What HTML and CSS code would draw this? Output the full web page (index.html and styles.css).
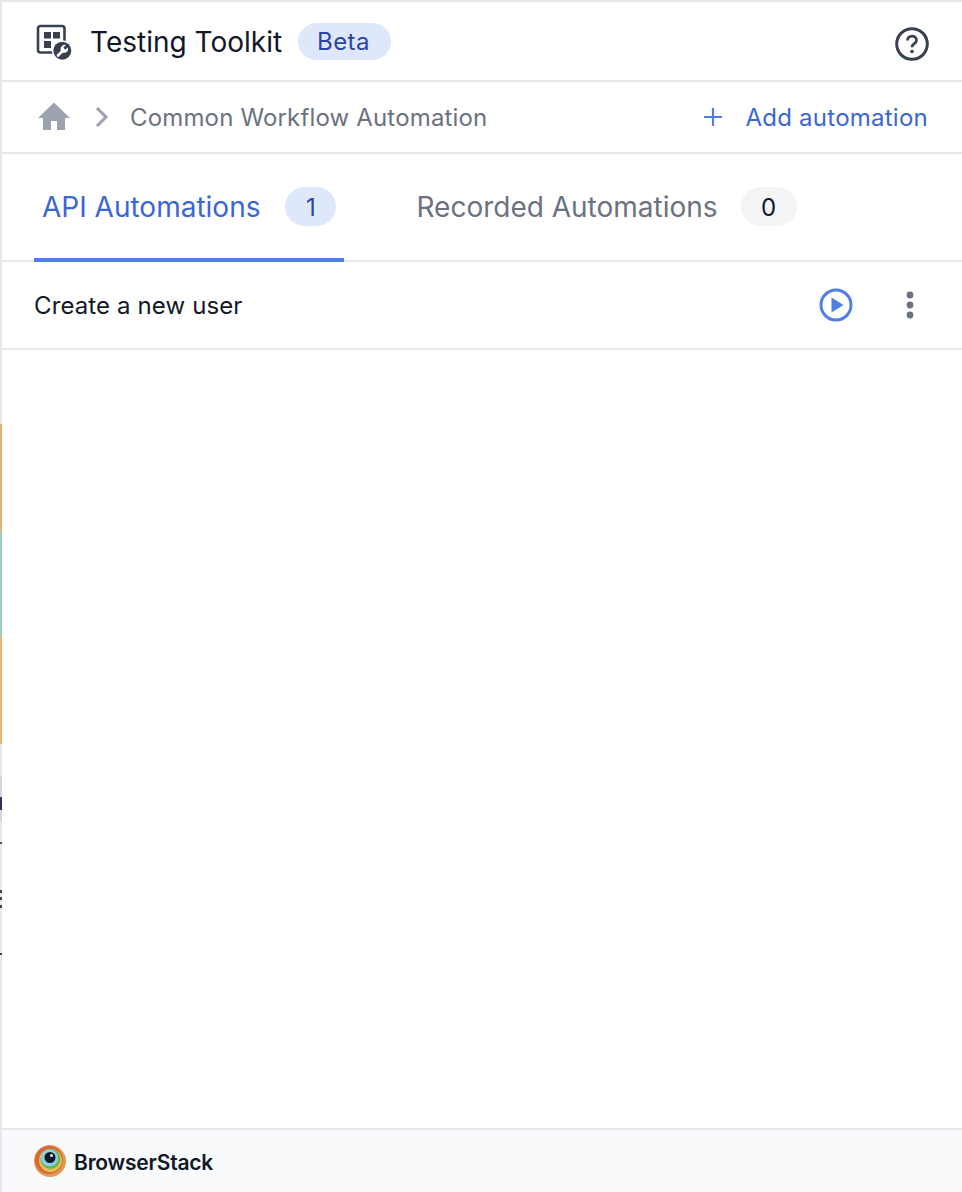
FILE: index.html
```html
<!DOCTYPE html>
<html lang="en">
<head>
<meta charset="utf-8">
<title>Testing Toolkit</title>
<link rel="stylesheet" href="styles.css">
</head>
<body>
<div class="edge" aria-hidden="true"></div>
<main class="panel">
  <header class="topbar">
    <div class="brand">
      <svg class="toolkit-icon" width="38" height="38" viewBox="0 0 38 38">
        <path d="M20 29.500H6.500A2.500 2.500 0 0 1 4 27V5.500A2.500 2.500 0 0 1 6.500 3h21.500A2.500 2.500 0 0 1 30.500 5.500V18" fill="none" stroke="#374151" stroke-width="2.600"/>
        <rect x="10" y="9" width="7" height="6.500" fill="#374151"/><rect x="19" y="9" width="7" height="6.500" fill="#374151"/><rect x="10" y="18" width="7" height="7" fill="#374151"/>
        <circle cx="28.300" cy="27.700" r="10.500" fill="#fff"/>
        <circle cx="28.300" cy="27.700" r="9" fill="#374151"/>
        <path d="M24 32.500l5-5" stroke="#fff" stroke-width="2.600" stroke-linecap="round"/>
        <path d="M27.500 29a4.500 4.500 0 0 1 .8-6.300 4.500 4.500 0 0 1 3.700-.700l-2.600 2.500 1.800 2.200 2.800-2.200a4.500 4.500 0 0 1-1.100 4.200 4.500 4.500 0 0 1-5.400.300z" fill="#fff"/>
      </svg>
      <h1 class="title">Testing Toolkit</h1>
      <span class="beta">Beta</span>
    </div>
    <svg class="help" width="34" height="34" viewBox="0 0 34 34" fill="none" stroke="#374151">
      <circle cx="17" cy="17" r="15.300" stroke-width="3"/>
      <path d="M12.500 13.500c0-2.600 2-4.300 4.500-4.300s4.500 1.700 4.500 4c0 3.500-4.500 3.500-4.500 7" stroke-width="2.800"/>
      <circle cx="17" cy="24.500" r="1.800" fill="#374151" stroke="none"/>
    </svg>
  </header>
  <nav class="crumbs">
    <div class="trail">
      <svg class="home" width="36" height="36" viewBox="0 0 36 36"><path d="M18 3.500L2 19h5v12h8v-9h6v9h8V19h5z" fill="#9ca3af"/></svg>
      <svg class="chev" width="16" height="22" viewBox="0 0 16 22" fill="none"><path d="M3 2l9 9-9 9" stroke="#9ca3af" stroke-width="3"/></svg>
      <span class="crumb-text">Common Workflow Automation</span>
    </div>
    <a class="add">
      <svg width="20" height="20" viewBox="0 0 20 20"><path d="M10 1v18M1 10h18" stroke="#4f7fe5" stroke-width="2.200"/></svg>
      <span>Add automation</span>
    </a>
  </nav>
  <div class="tabs">
    <div class="tab tab-active"><span>API Automations</span><b class="count count-blue">1</b></div>
    <div class="tab"><span>Recorded Automations</span><b class="count count-gray">0</b></div>
  </div>
  <div class="row">
    <span class="row-name">Create a new user</span>
    <div class="row-actions">
      <svg width="34" height="34" viewBox="0 0 34 34"><circle cx="17" cy="17" r="15" fill="none" stroke="#4f7fe5" stroke-width="3"/><path d="M12.500 9.500L24.500 17l-12 7.500z" fill="#4f7fe5"/></svg>
      <svg width="10" height="28" viewBox="0 0 10 28" fill="#6b7280"><circle cx="5" cy="4" r="3.400"/><circle cx="5" cy="14" r="3.400"/><circle cx="5" cy="24" r="3.400"/></svg>
    </div>
  </div>
  <div class="spacer"></div>
  <footer class="foot">
    <svg width="32" height="32" viewBox="0 0 32 32">
      <circle cx="16" cy="16" r="16" fill="#e39a4e"/>
      <circle cx="15" cy="15" r="14" fill="#d6683f"/>
      <circle cx="16.500" cy="15.500" r="11.500" fill="#e0c04e"/>
      <circle cx="16.500" cy="14" r="10" fill="#6fb356"/>
      <circle cx="15.500" cy="13" r="8.500" fill="#8fd0e0"/>
      <circle cx="16" cy="12.500" r="5.500" fill="#111827"/>
      <circle cx="17.500" cy="10.500" r="1.500" fill="#fff"/>
    </svg>
    <span class="foot-name">BrowserStack</span>
  </footer>
</main>
</body>
</html>
```
FILE: styles.css
```css
* { box-sizing: border-box; }
html, body { margin: 0; padding: 0; background: #fff; }
body { width: 962px; height: 1192px; position: relative; overflow: hidden; font-family: Inter, "Liberation Sans", sans-serif; }
.edge {
  position: absolute; left: 0; top: 0; width: 2px; height: 1192px;
  background: linear-gradient(to bottom,
    #e5e7eb 0 424px, #e0b56e 424px 532px, #9fcfc4 532px 636px, #ecb76f 636px 744px,
    #e5e7eb 744px 776px, #d5d7de 776px 797px, #2b3560 797px 810px, #d5d7de 810px 822px,
    #e5e7eb 822px 842px, #555 842px 844px, #e5e7eb 844px 890px, #444 890px 893px,
    #e5e7eb 893px 897px, #444 897px 900px, #e5e7eb 900px 905px, #444 905px 908px,
    #e5e7eb 908px 953px, #444 953px 955px, #e5e7eb 955px);
}
.panel { height: 1192px; display: flex; flex-direction: column; padding-left: 2px; border-top: 2px solid #e5e7eb; }
.topbar { height: 80px; display: flex; align-items: center; justify-content: space-between; padding: 2px 33px 0 32px; border-bottom: 2px solid #e5e7eb; flex: none; }
.brand { display: flex; align-items: center; }
.toolkit-icon { margin-right: 18px; }
.title { margin: 0 16px 0 0; font-size: 28px; font-weight: 400; color: #111827; line-height: 36px; }
.beta { height: 37px; margin-top: -2px; padding: 0 21px 0 19px; border-radius: 19px; background: #dfe8fb; color: #2b44a8; font-size: 24px; line-height: 37px; letter-spacing: 0.4px; }
.help { margin-top: 4px; }
.crumbs { height: 72px; display: flex; align-items: center; justify-content: space-between; padding: 0 34px; border-bottom: 2px solid #e5e7eb; flex: none; }
.trail { display: flex; align-items: center; }
.home { margin-right: 22px; }
.chev { margin-right: 20px; }
.crumb-text { font-size: 24px; color: #6b7280; letter-spacing: 0.16px; }
.add { display: flex; align-items: center; gap: 22px; color: #3b66d6; font-size: 24px; letter-spacing: 0.25px; }
.tabs { height: 108px; display: flex; padding-left: 32px; border-bottom: 2px solid #e5e7eb; flex: none; }
.tab { height: 108px; padding: 2px 8px 0; margin-right: 64px; display: flex; align-items: center; gap: 23px; font-size: 28px; color: #6b7280; white-space: nowrap; border-bottom: 4px solid transparent; }
.tab-active { gap: 25px; color: #3b66d6; border-bottom-color: #4f7fe5; }
.count { height: 39px; min-width: 51px; margin-top: -2px; padding: 2px 20px 0; border-radius: 20px; display: flex; align-items: center; justify-content: center; font-size: 24px; font-weight: 400; }
.count-blue { background: #dfe8fb; color: #2b44a8; }
.count-gray { background: #f3f4f6; color: #111827; min-width: 56px; }
.row { height: 88px; display: flex; align-items: center; justify-content: space-between; padding: 0 47px 0 32px; border-bottom: 2px solid #e5e7eb; flex: none; }
.row-name { font-size: 24px; color: #111827; letter-spacing: 0.12px; }
.row-actions { display: flex; align-items: center; gap: 52px; }
.spacer { flex: 1; }
.foot { height: 64px; background: #f9fafb; border-top: 2px solid #e5e7eb; display: flex; align-items: center; padding-left: 32px; gap: 8px; flex: none; }
.foot-name { font-size: 21px; font-weight: 600; color: #111827; letter-spacing: -0.2px; margin-top: 3px; }
```
